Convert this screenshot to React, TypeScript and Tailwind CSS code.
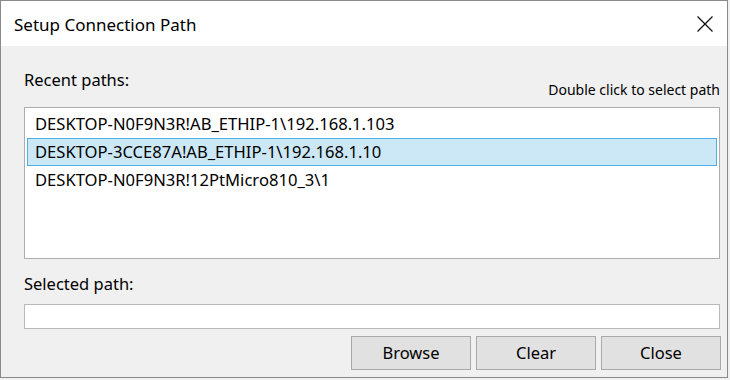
import React from "react";

const font = { fontFamily: '"Noto Sans", "Open Sans", Arial, sans-serif' };

export default function App() {
  const items = [
    "DESKTOP-N0F9N3R!AB_ETHIP-1\\192.168.1.103",
    "DESKTOP-3CCE87A!AB_ETHIP-1\\192.168.1.10",
    "DESKTOP-N0F9N3R!12PtMicro810_3\\1",
  ];
  return (
    <div className="w-[730px] h-[380px] bg-[#f0f0f0] text-black" style={font}>
      <div className="w-[728px] h-[378px] border border-[#8a8a8a] flex flex-col bg-[#f0f0f0]">
        <div className="h-[45px] bg-white flex items-center justify-between pl-[13px] pr-[13px] shrink-0">
          <span className="text-[17px] leading-[20px] mt-[2px]">Setup Connection Path</span>
          <svg width="18" height="18" viewBox="0 0 18 18" className="mt-[1px]">
            <line x1="1.5" y1="1.5" x2="16.5" y2="16.5" stroke="#111" strokeWidth="1.3" />
            <line x1="16.5" y1="1.5" x2="1.5" y2="16.5" stroke="#111" strokeWidth="1.3" />
          </svg>
        </div>
        <div className="flex-1 flex flex-col pl-[23px] pr-[7px]">
          <div className="h-[61px] flex justify-between items-start shrink-0">
            <span className="mt-[24px] text-[16.5px] leading-[20px]">Recent paths:</span>
            <span className="mt-[36px] text-[14px] leading-[16px]">Double click to select path</span>
          </div>
          <div className="h-[152px] border border-[#adadad] bg-white px-[2px] pt-[2px] shrink-0">
            {items.map((t, i) => (
              <div
                key={i}
                className={
                  i === 1
                    ? "h-[28px] flex items-center pl-[7px] border border-[#4cb0e6] bg-[#cce8f7] text-[16.6px]"
                    : "h-[28px] flex items-center pl-[8px] text-[16.6px]"
                }
              >
                {t}
              </div>
            ))}
          </div>
          <div className="h-[45px] flex items-start shrink-0">
            <span className="mt-[15px] text-[16.5px] leading-[20px]">Selected path:</span>
          </div>
          <div className="h-[25px] border border-[#b9b9b9] bg-white shrink-0" />
          <div className="flex justify-end gap-[5px] mt-[7px] mr-[-1px]">
            {["Browse", "Clear", "Close"].map((b) => (
              <div
                key={b}
                className="w-[120px] h-[34px] border border-[#a9a9a9] bg-[#e1e1e1] flex items-center justify-center text-[16.5px] shadow-[inset_0_0_0_1px_#e1e1e1]"
              >
                {b}
              </div>
            ))}
          </div>
        </div>
      </div>
    </div>
  );
}
